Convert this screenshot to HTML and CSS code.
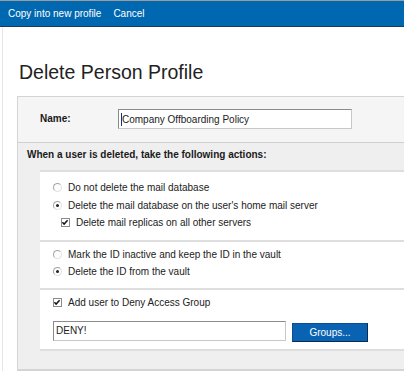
FILE: index.html
```html
<!DOCTYPE html>
<html lang="en">
  <head>
    <meta charset="UTF-8" />
    <title>Delete Person Profile</title>
    <link rel="stylesheet" href="styles.css">
  </head>
  <body>
    <div class="toolbar">
      <a class="toolbar-link">Copy into new profile</a>
      <a class="toolbar-link">Cancel</a>
    </div>

    <div class="page">
      <h1 class="title">Delete Person Profile</h1>

      <div class="panel">
        <div class="name-row">
          <span class="name-label">Name:</span>
          <div class="text-field name-field">
            <span class="caret"></span>Company Offboarding Policy
          </div>
        </div>

        <div class="actions">
          <p class="actions-heading">When a user is deleted, take the following actions:</p>

          <div class="options">
            <div class="group first">
              <div class="option">
                <span class="radio"></span>Do not delete the mail database
              </div>
              <div class="option">
                <span class="radio checked"></span>Delete the mail database on the user's home mail server
              </div>
              <div class="option sub">
                <span class="check checked">
                  <svg width="9" height="9" viewBox="0 0 9 9">
                    <path d="M1.6 4.3 L3.5 6.3 L7.4 2" fill="none" stroke="#111" stroke-width="1.6" />
                  </svg>
                </span>Delete mail replicas on all other servers
              </div>
            </div>

            <div class="group">
              <div class="option">
                <span class="radio"></span>Mark the ID inactive and keep the ID in the vault
              </div>
              <div class="option">
                <span class="radio checked"></span>Delete the ID from the vault
              </div>
            </div>

            <div class="group last">
              <div class="option">
                <span class="check checked">
                  <svg width="9" height="9" viewBox="0 0 9 9">
                    <path d="M1.6 4.3 L3.5 6.3 L7.4 2" fill="none" stroke="#111" stroke-width="1.6" />
                  </svg>
                </span>Add user to Deny Access Group
              </div>
              <div class="group-row">
                <div class="text-field deny-field">DENY!</div>
                <button class="groups-button">Groups...</button>
              </div>
            </div>
          </div>
        </div>
      </div>
    </div>
  </body>
</html>
```

FILE: styles.css
```css
body {
  margin: 0;
  font-family: "Liberation Sans", Arial, sans-serif;
  font-size: 10px;
  color: #1a1a1a;
  background-color: #fff;
  overflow: hidden;
}
.toolbar {
  display: flex;
  align-items: center;
  gap: 12px;
  height: 25px;
  padding-left: 8px;
  background-color: #0067b1;
  border-top: 1px solid #9c9c9c;
  border-bottom: 1px solid #1d3b5f;
}
.toolbar-link {
  color: #fff;
  font-size: 10px;
  cursor: pointer;
}
.page {
  margin-left: 2px;
  border-left: 1px solid #e6e6e6;
  padding-left: 14px;
  padding-top: 1px;
}
.title {
  margin: 32px 0 12px 2px;
  font-size: 19.5px;
  font-weight: normal;
  line-height: 24px;
  color: #222;
}
.panel {
  margin-right: -20px;
  border: 1px solid #d4d4d4;
  border-bottom-width: 2px;
  background-color: #f5f5f5;
}
.name-row {
  display: flex;
  align-items: center;
  height: 45px;
  padding-left: 22px;
  border-bottom: 1px solid #cfcfcf;
}
.name-label {
  width: 78px;
  font-weight: bold;
  margin-top: -2px;
}
.text-field {
  box-sizing: border-box;
  height: 20px;
  padding: 0 2px;
  line-height: 17px;
  background-color: #fff;
  border: 1px solid #8b8b8b;
  border-right-color: #c8c8c8;
  border-bottom-color: #c8c8c8;
  color: #222;
}
.name-field {
  width: 234px;
  display: flex;
  align-items: center;
  margin-top: -1px;
}
.caret {
  width: 1px;
  height: 13px;
  background-color: #1b2f80;
}
.actions {
  background-color: #efefef;
  padding: 5px 0 18px 0;
}
.actions-heading {
  margin: 0 0 9px 9px;
  font-weight: bold;
  line-height: 13px;
}
.options {
  margin-left: 22px;
  background-color: #fff;
  border-top: 2px solid #dedede;
  border-bottom: 2px solid #dedede;
}
.group {
  padding: 4px 0 7px 13px;
  border-bottom: 2px solid #dedede;
}
.group.first {
  padding-top: 7px;
  padding-bottom: 8px;
}
.group.last {
  border-bottom: none;
  padding-bottom: 7px;
}
.option {
  display: flex;
  align-items: center;
  height: 17.5px;
  color: #222;
}
.option.sub {
  padding-left: 8px;
}
.radio {
  box-sizing: border-box;
  width: 9px;
  height: 9px;
  margin-right: 6px;
  border-radius: 50%;
  border: 1px solid #a4a4a4;
  border-right-color: #e2e2e2;
  border-bottom-color: #e2e2e2;
  background-color: #fdfdfd;
  display: flex;
  align-items: center;
  justify-content: center;
}
.radio.checked::after {
  content: "";
  width: 3px;
  height: 3px;
  border-radius: 50%;
  background-color: #222;
}
.check {
  box-sizing: border-box;
  width: 9px;
  height: 9px;
  margin-right: 6px;
  border: 1px solid #8a8a8a;
  background-color: #fff;
  display: flex;
}
.check svg {
  margin: -1px 0 0 -1px;
}
.group-row {
  display: flex;
  align-items: flex-start;
  gap: 6px;
  margin-top: 10px;
}
.deny-field {
  width: 233px;
}
.groups-button {
  box-sizing: border-box;
  width: 76px;
  height: 19px;
  margin-top: 2px;
  padding: 0;
  font-family: "Liberation Sans", Arial, sans-serif;
  font-size: 10px;
  color: #fff;
  background-color: #0a63b2;
  border: 1px solid #0b4d92;
  border-right-color: #0a2b52;
  border-bottom-color: #0a2b52;
  cursor: pointer;
}
```
